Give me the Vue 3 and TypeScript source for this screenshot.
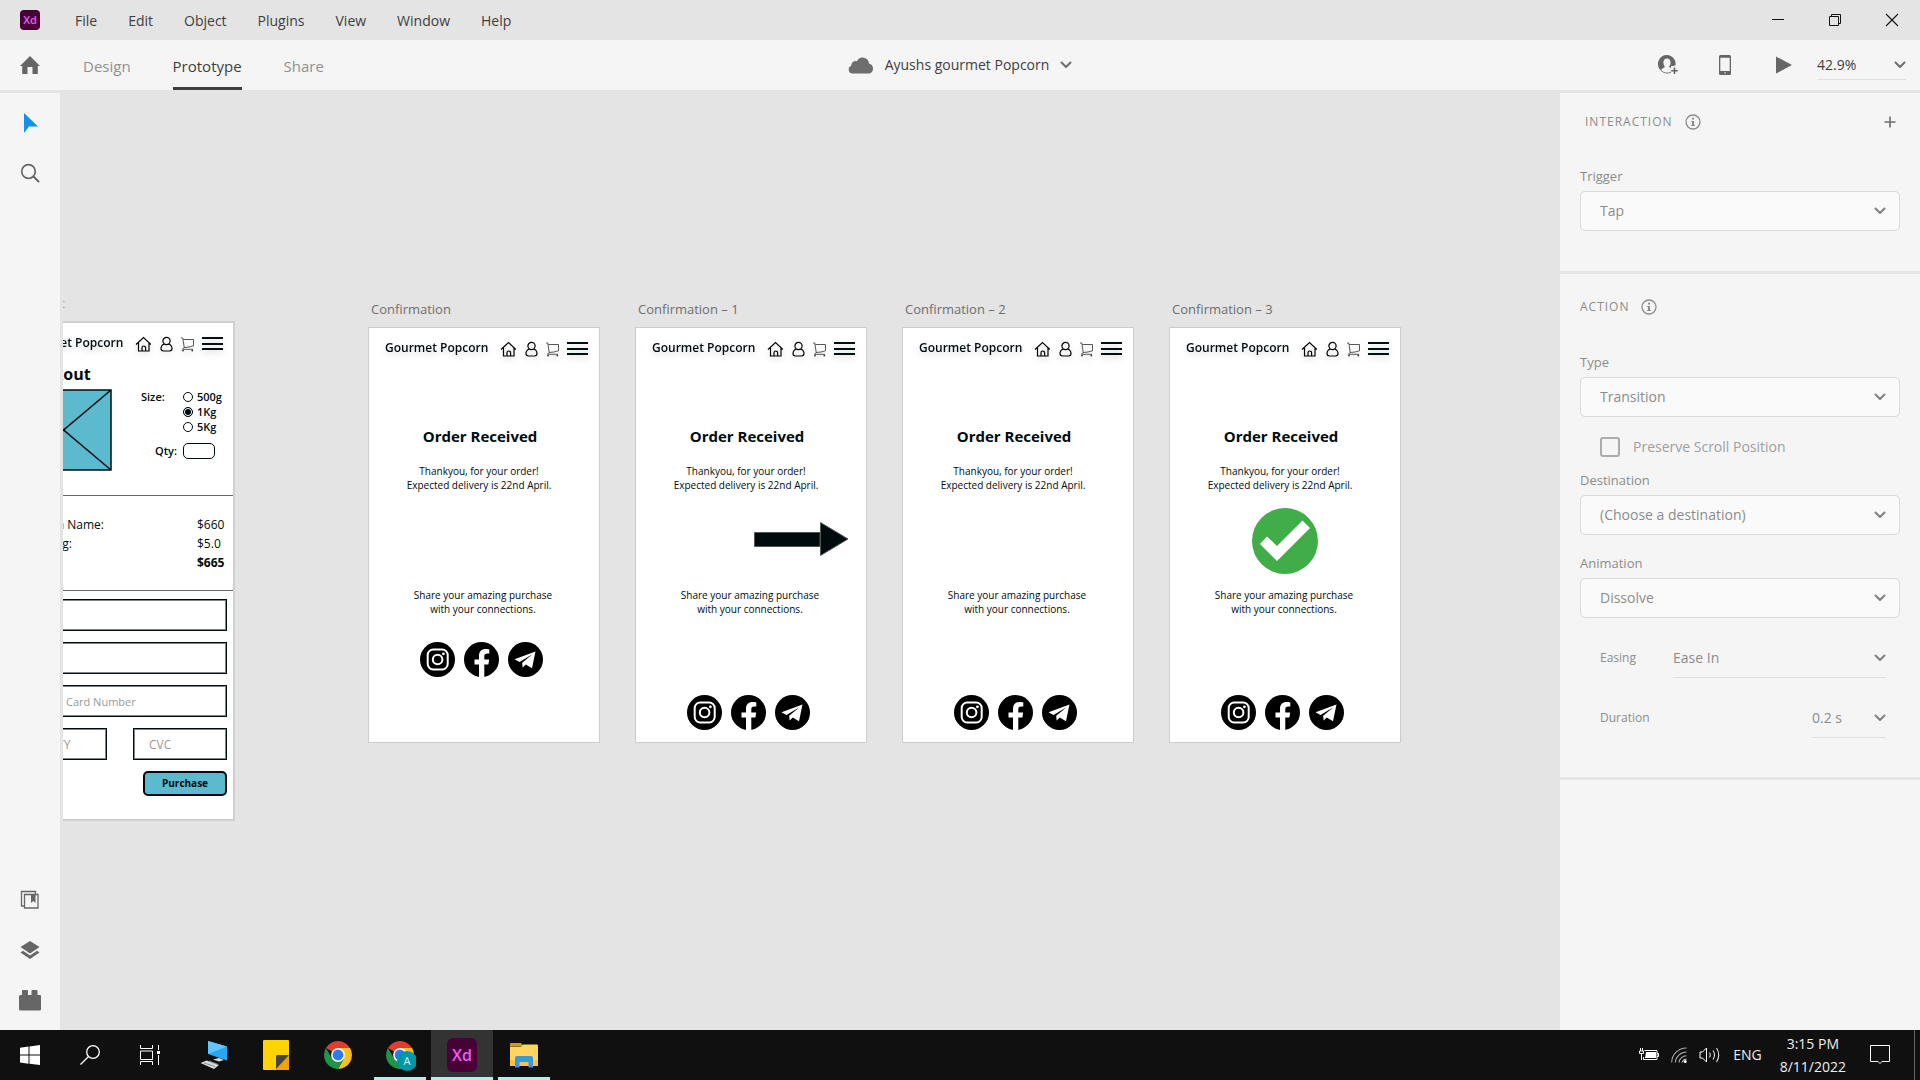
<script setup lang="ts">
import { ref } from 'vue'

interface Board {
  name: string
  left: number
  graphic: 'none' | 'arrow' | 'check'
  low: boolean
}

const menus: string[] = ['File', 'Edit', 'Object', 'Plugins', 'View', 'Window', 'Help']
const tabs: string[] = ['Design', 'Prototype', 'Share']
const activeTab = ref('Prototype')

const boards: Board[] = [
  { name: 'Confirmation', left: 305, graphic: 'none', low: false },
  { name: 'Confirmation – 1', left: 572, graphic: 'arrow', low: true },
  { name: 'Confirmation – 2', left: 839, graphic: 'none', low: true },
  { name: 'Confirmation – 3', left: 1106, graphic: 'check', low: true },
]

const sizes: string[] = ['500g', '1Kg', '5Kg']
const size = ref('1Kg')
const preserve = ref(false)
</script>

<template>
  <div class="app">
    <svg class="defs" width="0" height="0" aria-hidden="true">
      <symbol id="chev" viewBox="0 0 12 8"><path d="M1.5 1.5 6 6l4.500-4.500" fill="none" stroke="currentColor" stroke-width="2" stroke-linecap="round" stroke-linejoin="round" /></symbol>
      <symbol id="info" viewBox="0 0 16 16">
        <circle cx="8" cy="8" r="7" fill="none" stroke="currentColor" stroke-width="1.300" />
        <path d="M7 3.800h2v1.800H7zM6.200 6.900H9v4.200h.9v1H6.200v-1H7V7.900h-.8z" fill="currentColor" />
      </symbol>
      <symbol id="home" viewBox="0 0 16 16">
        <path d="M1 8.500 8.500 1.500 16 8.500M3.500 7v8h10.500V7M7 15v-3.200a1.800 1.800 0 0 1 3.600 0V15" fill="none" stroke="#000" stroke-width="1.200" />
      </symbol>
      <symbol id="person" viewBox="0 0 14 16">
        <circle cx="7.500" cy="5" r="3.600" fill="none" stroke="#000" stroke-width="1.200" />
        <path d="M5.300 8C3 8.800 2 10.600 2 12.600c0 1.600.9 2.400 2.400 2.400h6.200c1.500 0 2.400-.8 2.400-2.400 0-2-1-3.800-3.300-4.600" fill="none" stroke="#000" stroke-width="1.200" />
      </symbol>
      <symbol id="cart" viewBox="0 0 13 16">
        <path d="M0 2h1.800l1.400 9.300M2.300 3.500H12.500v6.300L8 11 3 11.500M3.200 11.300 1.500 13.300h10.500" fill="none" stroke="#444" stroke-width=".9" />
        <circle cx="2" cy="14.600" r=".9" fill="#333" /><circle cx="11.300" cy="14.600" r=".9" fill="#333" />
      </symbol>
      <symbol id="burger" viewBox="0 0 21 16"><path d="M0 1h21v2H0zM0 7h21v2H0zM0 12h21v2H0z" fill="#000f12" /></symbol>
      <symbol id="insta" viewBox="0 0 35 35">
        <circle cx="17.500" cy="17.500" r="17.500" />
        <rect x="7.700" y="7.500" width="20" height="20" rx="5.500" fill="none" stroke="#fff" stroke-width="2" />
        <circle cx="17.600" cy="17.500" r="4.800" fill="none" stroke="#fff" stroke-width="2" />
        <circle cx="23.400" cy="11.800" r="1.400" fill="#fff" />
      </symbol>
      <symbol id="face" viewBox="0 0 35 35">
        <circle cx="17.500" cy="17.500" r="17.500" />
        <path d="M15 35V22.600h-4.500v-5H15v-3.900c0-4.400 2.600-6.800 6.600-6.800 1.900 0 3.700.3 3.700.3v4.300h-2.100c-2.200 0-2.900 1.300-2.900 2.700v3.400h4.900l-.8 5h-4.100V35z" fill="#fff" />
      </symbol>
      <symbol id="plane" viewBox="0 0 35 35">
        <circle cx="17.500" cy="17.500" r="17.500" />
        <path d="M6.500 17.300 27.500 9.600 24 26.200 17.800 22.600 14.600 25.600 14.200 20.800 24.500 12.300 11.500 20z" fill="#fff" />
      </symbol>
      <symbol id="chrome" viewBox="0 0 28 28">
        <path d="M14 14 1.900 7A14 14 0 0 1 26.100 7z" fill="#e33b2e" />
        <path d="M14 14V7h12.100A14 14 0 0 1 14 28l6-10.500z" fill="#fbc116" />
        <path d="M8 17.500 1.900 7A14 14 0 0 0 14 28l6-10.500z" fill="#1f9647" />
        <circle cx="14" cy="14" r="6.900" fill="#fff" /><circle cx="14" cy="14" r="5.400" fill="#2b7bec" />
      </symbol>
    </svg>

    <header class="titlebar">
      <span class="xd small">Xd</span>
      <nav class="menus" aria-label="Application menu">
        <button v-for="m in menus" :key="m" type="button">{{ m }}</button>
      </nav>
      <div class="window-buttons">
        <button type="button" aria-label="Minimize"><svg width="14" height="14" viewBox="0 0 14 14"><path d="M1 6.500h12" stroke="#111" /></svg></button>
        <button type="button" aria-label="Restore"><svg width="14" height="14" viewBox="0 0 14 14"><path d="M1.500 3.500h9v9h-9zM3.500 3.500v-2h9v9h-2" fill="none" stroke="#111" /></svg></button>
        <button type="button" aria-label="Close"><svg width="14" height="14" viewBox="0 0 14 14"><path d="m1 1 12 12M13 1 1 13" stroke="#111" stroke-width="1.100" /></svg></button>
      </div>
    </header>

    <div class="toolbar">
      <div class="left-tools">
        <button type="button" class="home" aria-label="Home"><svg width="20" height="20" viewBox="0 0 20 20"><path d="M10 1 20 11h-2.200v8H12.500v-7h-5v7H2.200v-8H0z" fill="#666" /></svg></button>
        <nav class="tabs" aria-label="Modes">
          <button v-for="t in tabs" :key="t" type="button" :class="{ active: t === activeTab }" @click="activeTab = t">{{ t }}</button>
        </nav>
      </div>
      <button type="button" class="doc">
        <svg width="26" height="18" viewBox="0 0 26 18"><path d="M4.500 17.500a4 4 0 0 1-1.300-7.700A4.500 4.500 0 0 1 9 5.200 6.300 6.300 0 0 1 21 7.500a5.200 5.200 0 0 1 .5 10z" fill="#6e6e6e" /></svg>
        <span>Ayushs gourmet Popcorn</span>
        <svg class="chev" width="12" height="8"><use href="#chev" /></svg>
      </button>
      <div class="right-tools">
        <button type="button" class="invite" aria-label="Invite"><svg width="22" height="22" viewBox="0 0 22 22"><path d="M10 1a9 9 0 0 0-6 15.700c.5-1.600 1.700-2.500 3.300-3.200.6-.3.600-1 .1-1.700C6 10 5.600 4.500 10 4.500s4 5.500 2.600 7.300c-.5.700-.5 1.400.1 1.700l1.300.5V12h3v-.5h1.500A9 9 0 0 0 10 1z" fill="#666" /><path d="M4 16.500a9 9 0 0 0 10 1.600" fill="none" stroke="#777" /><path d="M17.500 13.500v6.500M14.200 16.700h6.500" stroke="#666" stroke-width="1.600" /></svg></button>
        <button type="button" class="device" aria-label="Device preview"><svg width="14" height="20" viewBox="0 0 14 20"><path fill-rule="evenodd" d="M2.500 0h9A1.500 1.500 0 0 1 13 1.500v17a1.500 1.500 0 0 1-1.500 1.500h-9A1.500 1.500 0 0 1 1 18.500v-17A1.500 1.500 0 0 1 2.500 0zM2.300 2.700V16h9.400V2.700zM6.500 17.300v1.200h1.200v-1.200z" fill="#666" /></svg></button>
        <button type="button" class="play" aria-label="Play"><svg width="18" height="18" viewBox="0 0 18 18"><path d="M1 .5 17 9 1 17.500z" fill="#666" /></svg></button>
        <div class="pick line zoom">
          <select aria-label="Zoom level"><option>42.9%</option></select>
          <svg class="chev" width="12" height="8"><use href="#chev" /></svg>
        </div>
      </div>
    </div>

    <main class="work">
      <aside class="rail">
        <div class="rail-group">
          <button type="button" aria-label="Select"><svg width="20" height="22" viewBox="0 0 20 22"><path d="M4 1v20l5-6.500h9z" fill="#1491e8" /></svg></button>
          <button type="button" aria-label="Zoom"><svg width="20" height="20" viewBox="0 0 20 20"><circle cx="8.500" cy="8.500" r="6.800" fill="none" stroke="#666" stroke-width="1.700" /><path d="m13.500 13.500 5 5" stroke="#666" stroke-width="2" stroke-linecap="round" /></svg></button>
        </div>
        <div class="rail-group">
          <button type="button" aria-label="Libraries"><svg width="20" height="20" viewBox="0 0 20 20"><path d="M4 16H1.500V1.500h14V4M4.500 4.500h13.500V18H4.500z" fill="none" stroke="#666" stroke-width="1.300" /><path d="M11 4.500h4.500V13l-2.200-2L11 13z" fill="#666" /></svg></button>
          <button type="button" aria-label="Layers"><svg width="20" height="20" viewBox="0 0 20 20"><path d="m10 1 9.500 6L10 13.500.5 7z" fill="#666" /><path d="m.5 12.500 2.500-1.700 7 4.700 7-4.700 2.500 1.700L10 19z" fill="#666" /></svg></button>
          <button type="button" aria-label="Plugins"><svg width="22" height="22" viewBox="0 0 22 22"><path d="M1.500 6H3V2a1 1 0 0 1 1-1h4a1 1 0 0 1 1 1v4h3.500V2a1 1 0 0 1 1-1h4a1 1 0 0 1 1 1v4h2A1.200 1.200 0 0 1 22 7.200V20a1.500 1.500 0 0 1-1.500 1.500h-19A1.500 1.500 0 0 1 0 20V7.500A1.500 1.500 0 0 1 1.500 6z" fill="#666" /></svg></button>
        </div>
      </aside>

      <section class="canvas" aria-label="Canvas">
        <article class="board-wrap checkout-wrap">
          <h3 class="board-name faint">Checkout</h3>
          <div class="board checkout">
            <div class="board-head">
              <span>Gourmet Popcorn</span>
              <div class="board-icons">
                <svg width="16" height="16"><use href="#home" /></svg>
                <svg width="14" height="16"><use href="#person" /></svg>
                <svg width="13" height="16"><use href="#cart" /></svg>
                <svg width="21" height="16"><use href="#burger" /></svg>
              </div>
            </div>
            <h2>Checkout</h2>
            <div class="product">
              <svg width="97" height="82" viewBox="0 0 97 82"><path d="M1 1h95v80H1zL96 81M96 1 1 81" fill="#5bbacd" stroke="#000f12" stroke-width="1.500" /></svg>
              <div class="options">
                <span>Size:</span>
                <div>
                  <label v-for="s in sizes" :key="s" class="radio"><input v-model="size" type="radio" name="size" :value="s" />{{ s }}</label>
                </div>
                <label for="qty" class="qty-label">Qty:</label>
                <input id="qty" class="qty" type="text" />
              </div>
            </div>
            <dl class="prices">
              <div><dt>Item Name:</dt><dd>$660</dd></div>
              <div><dt>Shipping:</dt><dd>$5.0</dd></div>
              <div class="total"><dt></dt><dd>$665</dd></div>
            </dl>
            <form class="payment" @submit.prevent>
              <input type="text" aria-label="Name" />
              <input type="text" aria-label="Address" />
              <input class="card-number" type="text" aria-label="Card Number" placeholder="Card Number" />
              <div class="pair">
                <input class="expiry" type="text" aria-label="Expiry" placeholder="MM/YY" />
                <input class="cvc" type="text" aria-label="CVC" placeholder="CVC" />
              </div>
              <button type="submit">Purchase</button>
            </form>
          </div>
        </article>

        <article v-for="b in boards" :key="b.name" class="board-wrap" :style="{ left: b.left + 'px' }">
          <h3 class="board-name">{{ b.name }}</h3>
          <div class="board">
            <div class="board-head">
              <span>Gourmet Popcorn</span>
              <div class="board-icons">
                <svg width="16" height="16"><use href="#home" /></svg>
                <svg width="14" height="16"><use href="#person" /></svg>
                <svg width="13" height="16"><use href="#cart" /></svg>
                <svg width="21" height="16"><use href="#burger" /></svg>
              </div>
            </div>
            <h2 class="received">Order Received</h2>
            <p class="thanks">Thankyou, for your order!<br />Expected delivery is 22nd April.</p>
            <div class="graphic" :class="b.graphic">
              <svg v-if="b.graphic === 'arrow'" width="95" height="34" viewBox="0 0 95 34"><path d="M.5 10.500H66v14H.5zM66.500.5 94 17 66.500 33.500z" fill="#000b0e" stroke="#555" /></svg>
              <svg v-if="b.graphic === 'check'" width="66" height="66" viewBox="0 0 66 66"><circle cx="33" cy="33" r="33" fill="#40ad49" /><path d="m8 36 7-7.500 10 9.500L50.500 12.500 58 20 25 53z" fill="#fff" /></svg>
            </div>
            <p class="share">Share your amazing purchase<br />with your connections.</p>
            <div class="socials" :class="{ low: b.low }">
              <a href="#" aria-label="Instagram"><svg width="35" height="35"><use href="#insta" /></svg></a>
              <a href="#" aria-label="Facebook"><svg width="35" height="35"><use href="#face" /></svg></a>
              <a href="#" aria-label="Telegram"><svg width="35" height="35"><use href="#plane" /></svg></a>
            </div>
          </div>
        </article>
      </section>

      <aside class="panel">
        <section class="interaction">
          <h4 class="inset">INTERACTION <svg width="16" height="16"><use href="#info" /></svg>
            <button type="button" aria-label="Add interaction"><svg width="12" height="12" viewBox="0 0 12 12"><path d="M6 .5v11M.5 6h11" stroke="#6e6e6e" stroke-width="1.600" /></svg></button>
          </h4>
          <label class="cap" for="trigger">Trigger</label>
          <div class="pick box"><select id="trigger"><option>Tap</option></select><svg class="chev" width="12" height="8"><use href="#chev" /></svg></div>
        </section>
        <section class="action">
          <h4>ACTION <svg width="16" height="16"><use href="#info" /></svg></h4>
          <label class="cap" for="type">Type</label>
          <div class="pick box"><select id="type"><option>Transition</option></select><svg class="chev" width="12" height="8"><use href="#chev" /></svg></div>
          <label class="preserve"><input v-model="preserve" type="checkbox" />Preserve Scroll Position</label>
          <label class="cap" for="destination">Destination</label>
          <div class="pick box"><select id="destination"><option>(Choose a destination)</option></select><svg class="chev" width="12" height="8"><use href="#chev" /></svg></div>
          <label class="cap spaced" for="animation">Animation</label>
          <div class="pick box"><select id="animation"><option>Dissolve</option></select><svg class="chev" width="12" height="8"><use href="#chev" /></svg></div>
          <div class="row">
            <label for="easing">Easing</label>
            <div class="pick line easing"><select id="easing"><option>Ease In</option></select><svg class="chev" width="12" height="8"><use href="#chev" /></svg></div>
          </div>
          <div class="row">
            <label for="duration">Duration</label>
            <div class="pick line duration"><select id="duration"><option>0.2 s</option></select><svg class="chev" width="12" height="8"><use href="#chev" /></svg></div>
          </div>
        </section>
      </aside>
    </main>

    <footer class="taskbar">
      <div class="tasks">
        <button type="button" aria-label="Start"><svg width="20" height="20" viewBox="0 0 20 20"><path d="M0 2.700 8.500 1.500V9.500H0zM9.500 1.400 20 0v9.500H9.500zM0 10.500h8.500v8.200L0 17.500zM9.500 10.500H20V20L9.500 18.700z" fill="#fff" /></svg></button>
        <button type="button" aria-label="Search"><svg width="20" height="20" viewBox="0 0 20 20"><circle cx="13" cy="7" r="6.300" fill="none" stroke="#fff" stroke-width="1.300" /><path d="M8.500 11.500.5 19.500" stroke="#fff" stroke-width="1.300" /></svg></button>
        <button type="button" aria-label="Task view"><svg width="20" height="20" viewBox="0 0 20 20"><path d="M.5 0v3.500h12V0M.5 6h12v8.500H.5zM.5 20v-3.500h12V20M18.500 0v5M18.500 10v10" fill="none" stroke="#fff" /><path d="M17 6h3v3h-3z" fill="#fff" /></svg></button>
        <button type="button" class="pinned" aria-label="Remote desktop"><svg width="28" height="30" viewBox="0 0 28 30"><path d="m8 1 19 5.500v14L8 14z" fill="#2aa5f3" /><path d="m8 1 19 5.500L8 14z" fill="#62c5ff" /><path d="m13 19.500 6-1.500 5 2-5 1.500zM.5 23l6-2.500L19 25l-5 4z" fill="#d5dadd" /><path d="m4 23 11 3.500M9 21l9 3.500" stroke="#8b9499" /></svg></button>
        <button type="button" aria-label="Sticky notes"><svg width="26" height="30" viewBox="0 0 26 30"><rect width="26" height="30" rx="1" fill="#ffd400" /><path d="M13 15h13v15H13z" fill="#eda600" /><path d="M14 15h12L13 29V16z" fill="#444" /></svg></button>
        <button type="button" aria-label="Chrome"><svg width="28" height="28"><use href="#chrome" /></svg></button>
        <button type="button" class="open" aria-label="Chrome, profile A"><svg width="32" height="32" viewBox="-2 -2 32 32"><use href="#chrome" width="28" height="28" /><circle cx="21" cy="20" r="10" fill="#0097a7" /><text x="21" y="24" text-anchor="middle" font-size="11" fill="#d9f3f5">A</text></svg></button>
        <button type="button" class="open current" aria-label="Adobe XD"><span class="xd">Xd</span></button>
        <button type="button" class="open" aria-label="File Explorer"><svg width="28" height="26" viewBox="0 0 28 26"><path d="M0 2a1 1 0 0 1 1-1h10l2 3H0z" fill="#dd9a00" /><path d="M0 4.500h11l2-2h14a1 1 0 0 1 1 1V24H0z" fill="#ffd460" /><path d="M0 18h28v6H0z" fill="#f7c440" /><path d="M5 25.500V16a2 2 0 0 1 2-2h14a2 2 0 0 1 2 2v9.500h-4.500V20h-9v5.500z" fill="#3c96dd" /></svg></button>
      </div>
      <div class="tray">
        <svg width="20" height="14" viewBox="0 0 20 14"><path d="M5.500 2.500h12.500v9H4.500V9M18 5.500h1.500v3H18" fill="none" stroke="#fff" /><path d="M7 4h10v6H6z" fill="#fff" /><path d="M1.500 0v3M3.500 0v3M.5 3v2.500h4V3zM2.500 5.500V12" fill="none" stroke="#fff" /></svg>
        <svg width="16" height="16" viewBox="0 0 16 16"><path d="M.7 15.500A14.800 14.800 0 0 1 15.500 1M4.300 15.500A11.200 11.200 0 0 1 15.500 5M8 15.500A7.500 7.500 0 0 1 15.500 8.800" fill="none" stroke="#aaa" stroke-width="1.100" /><path d="M11 15.500a4.500 4.500 0 0 1 4.500-3.500" fill="none" stroke="#ddd" /><circle cx="14.200" cy="14.500" r="1.500" fill="#fff" /></svg>
        <svg width="22" height="18" viewBox="0 0 22 18"><path d="M1 6h2.500L7.500 2v14L3.500 12H1z" fill="none" stroke="#fff" /><path d="M10.500 6.500q1.500 2.500 0 5M14 4.500q3 4.500 0 9M17.500 2q4.500 7 0 14" fill="none" stroke="#ddd" stroke-width="1.100" /></svg>
        <span class="lang">ENG</span>
        <time class="clock">3:15 PM<br />8/11/2022</time>
        <svg class="notice" width="20" height="20" viewBox="0 0 20 20"><path d="M.500.500h19v16H12l-2 2-2-2H.5z" fill="none" stroke="#fff" /></svg>
      </div>
    </footer>
  </div>
</template>

<style>
body { margin: 0; }
*, *::before, *::after { box-sizing: border-box; }
</style>

<style scoped>
.app {
  min-height: 100vh;
  display: flex;
  flex-direction: column;
  overflow: hidden;
  background: #e4e4e4;
  color: #3e3e3e;
  font-family: "Open Sans", "Noto Sans", sans-serif;
  font-size: 14px;
  line-height: 20px;
}
.defs { position: absolute; }
svg { display: block; flex: none; }
h2, h3, h4, p, dl, dd { margin: 0; }
button, input, select { font: inherit; color: inherit; }
button { border: 0; padding: 0; background: none; }
input, select { margin: 0; min-width: 0; border-radius: 0; }

.xd {
  display: grid;
  place-items: center;
  width: 30px;
  height: 34px;
  border-radius: 6px;
  background: #470137;
  color: #ec5ff0;
  font-weight: 600;
  font-size: 16px;
}
.xd.small { width: 20px; height: 20px; border-radius: 4px; font-size: 11px; }

.titlebar { height: 40px; display: flex; align-items: center; padding-left: 20px; }
.menus { display: flex; gap: 31px; padding: 2px 0 0 35px; }
.window-buttons { margin-left: auto; display: flex; }
.window-buttons button { width: 57px; height: 40px; display: grid; place-items: center; }

.toolbar {
  height: 50px;
  display: grid;
  grid-template-columns: 1fr auto 1fr;
  background: #f5f5f5;
}
.left-tools { display: flex; }
.home { width: 60px; display: grid; place-items: center; }
.tabs { display: flex; gap: 42px; padding-left: 23px; font-size: 15px; color: #919191; }
.tabs button { padding-top: 5px; border-bottom: 3px solid transparent; }
.tabs .active { color: #3e3e3e; border-color: #3e3e3e; }
.doc { display: flex; align-items: center; gap: 11px; }
.chev { color: #6e6e6e; }
.right-tools { display: flex; justify-content: flex-end; align-items: center; padding-right: 14px; }
.invite { margin-right: 39px; }
.device { margin-right: 43px; }
.play { margin-right: 24px; }

.pick { display: grid; align-items: center; }
.pick select, .pick .chev { grid-area: 1 / 1; }
.pick select { appearance: none; width: 100%; height: 100%; border: 0; background: transparent; padding: 0; outline: 0; }
.pick .chev { justify-self: end; pointer-events: none; }
.line { border-bottom: 1px solid #e0e0e0; }
.zoom { width: 89px; height: 30px; }

.work { flex: 1; display: flex; padding-top: 3px; }
.rail { width: 60px; background: #f5f5f5; display: flex; flex-direction: column; justify-content: space-between; padding: 5px 0; }
.rail-group { display: flex; flex-direction: column; }
.rail button { height: 50px; display: grid; place-items: center; }

.canvas { position: relative; flex: 1; min-width: 0; margin-left: 3px; overflow: hidden; }
.board-wrap { position: absolute; top: 206px; width: 232px; }
.checkout-wrap { left: -60px; top: 200px; }
.board-name { height: 28px; padding-left: 3px; font-size: 13px; font-weight: 400; color: #6e6e6e; white-space: nowrap; }
.faint { padding-left: 5px; color: #a0a0a0; }
.board { height: 416px; border: 1px solid #cdcdcd; background: #fff; color: #000b0e; }
.board-head {
  display: flex;
  align-items: center;
  justify-content: space-between;
  height: 30px;
  padding: 12px 11px 0 16px;
  font-size: 12px;
  line-height: 16px;
  font-weight: 600;
  white-space: nowrap;
  filter: drop-shadow(0 3px 3px rgba(0, 0, 0, .16));
}
.board-head span { padding-bottom: 2px; }
.board-icons { display: flex; gap: 8px; }
.board h2 { font-size: 16px; line-height: 24px; font-weight: 700; }
.board .received { margin-top: 66px; padding-right: 8px; font-size: 15px; text-align: center; }
.board p { font-size: 10px; line-height: 14px; text-align: center; }
.thanks { margin-top: 16px; padding-right: 10px; }
.graphic { height: 96px; display: flex; justify-content: center; align-items: flex-start; }
.arrow { justify-content: flex-end; padding: 30px 17px 0 0; }
.check { padding-top: 16px; }
.share { padding-right: 2px; }
.socials { display: flex; gap: 9px; padding: 26px 0 0 51px; }
.low { padding-top: 79px; }

.checkout { height: 500px; border-width: 2px; border-color: #d0d0d0; }
.checkout .board-head { padding-left: 15px; padding-right: 10px; }
.checkout h2 { margin: 9px 0 3px 10px; }
.product { display: flex; height: 107px; padding-left: 10px; border-bottom: 1px solid #666; }
.options {
  display: grid;
  grid-template-columns: 42px auto;
  align-content: start;
  row-gap: 9px;
  margin-left: 29px;
  font-size: 11px;
  line-height: 15px;
  font-weight: 600;
}
.radio { display: flex; align-items: center; gap: 4px; }
.radio input { appearance: none; width: 10px; height: 10px; border: 1px solid #000b0e; border-radius: 50%; background: #fff; }
.radio input:checked { background: #000b0e; box-shadow: inset 0 0 0 1px #fff; }
.qty-label { padding-right: 6px; text-align: right; }
.qty { width: 32px; height: 16px; border: 1px solid #000b0e; border-radius: 5px; background: #fff; padding: 0 4px; }
.prices { height: 95px; padding: 19px 6px 0 11px; border-bottom: 1px solid #666; font-size: 12px; line-height: 19px; }
.prices div { display: flex; justify-content: space-between; }
.prices dt { width: 88px; text-align: right; }
.prices div:nth-child(2) dt { width: 56px; }
.prices dd { width: 30px; }
.prices .total { font-weight: 700; }
.payment { display: flex; flex-direction: column; gap: 11px; padding: 8px 6px 0 10px; font-size: 12px; }
.payment input { height: 32px; border: 1px solid #000b0e; outline: 1px solid #000b0e80; outline-offset: -2px; background: #fff; padding: 0 15px; }
.payment input::placeholder { color: #999; opacity: 1; }
.payment .card-number { padding-left: 50px; font-size: 11px; }
.pair { display: flex; justify-content: space-between; }
.payment .expiry { width: 92px; }
.payment .cvc { width: 94px; }
.payment button { align-self: flex-end; width: 84px; height: 25px; border: 2px solid #000b0e; border-radius: 5px; background: #5bbacd; font-size: 10px; line-height: 15px; font-weight: 700; }

.panel { width: 360px; background: #f5f5f5; color: #8c8c8c; }
.panel section { border-bottom: 3px solid #e4e4e4; padding: 0 20px; }
.interaction { height: 181px; }
.panel .action { height: 506px; padding-top: 4px; }
.panel .chev { color: #808080; }
.panel h4 { display: flex; align-items: center; gap: 12px; height: 58px; font-size: 12px; font-weight: 400; letter-spacing: 1px; }
.panel h4 button { margin-left: auto; padding-right: 4px; }
.panel .inset { padding-left: 5px; }
.cap { display: block; height: 28px; padding-top: 3px; font-size: 13px; }
.interaction .cap { margin-top: 12px; }
.action .cap { margin-top: 13px; }
.box { height: 40px; border: 1px solid #dadada; border-radius: 5px; background: #fafafa; padding-right: 13px; }
.box select { padding-left: 19px; }
.preserve { display: flex; align-items: center; gap: 13px; height: 20px; margin: 20px 0 0 20px; color: #a0a0a0; }
.preserve input { appearance: none; width: 20px; height: 20px; border: 2px solid #acacac; border-radius: 3px; }
.action .preserve + .cap { margin-top: 10px; }
.action .spaced { margin-top: 15px; }
.row { display: flex; align-items: center; justify-content: space-between; height: 40px; margin: 20px 14px 0 20px; font-size: 12px; }
.line select { font-size: 14px; }
.row .line { height: 40px; }
.easing { width: 213px; }
.duration { width: 74px; }

.taskbar { height: 50px; background: #101010; color: #eee; display: flex; justify-content: space-between; }
.tasks { display: flex; }
.tasks button { width: 60px; display: grid; place-items: center; border: solid transparent; border-width: 3px 0; }
.tasks button:nth-child(n + 4) { width: 62px; }
.tasks .pinned { margin-left: 3px; }
.tasks .open { border-bottom-color: #aaf3ec; margin: 0 5px; }
.tasks .open:nth-child(n + 4) { width: 52px; }
.tasks .current:nth-child(n + 4) { width: 62px; margin: 0; background: #333; border-top-color: #333; }
.tray { display: flex; align-items: center; gap: 12px; padding-right: 5px; }
.lang { margin-right: 6px; }
.clock { text-align: center; line-height: 23px; }
.notice { margin: 0 12px; }
.tray::after { content: ""; width: 1px; height: 50px; background: #666; }
</style>
